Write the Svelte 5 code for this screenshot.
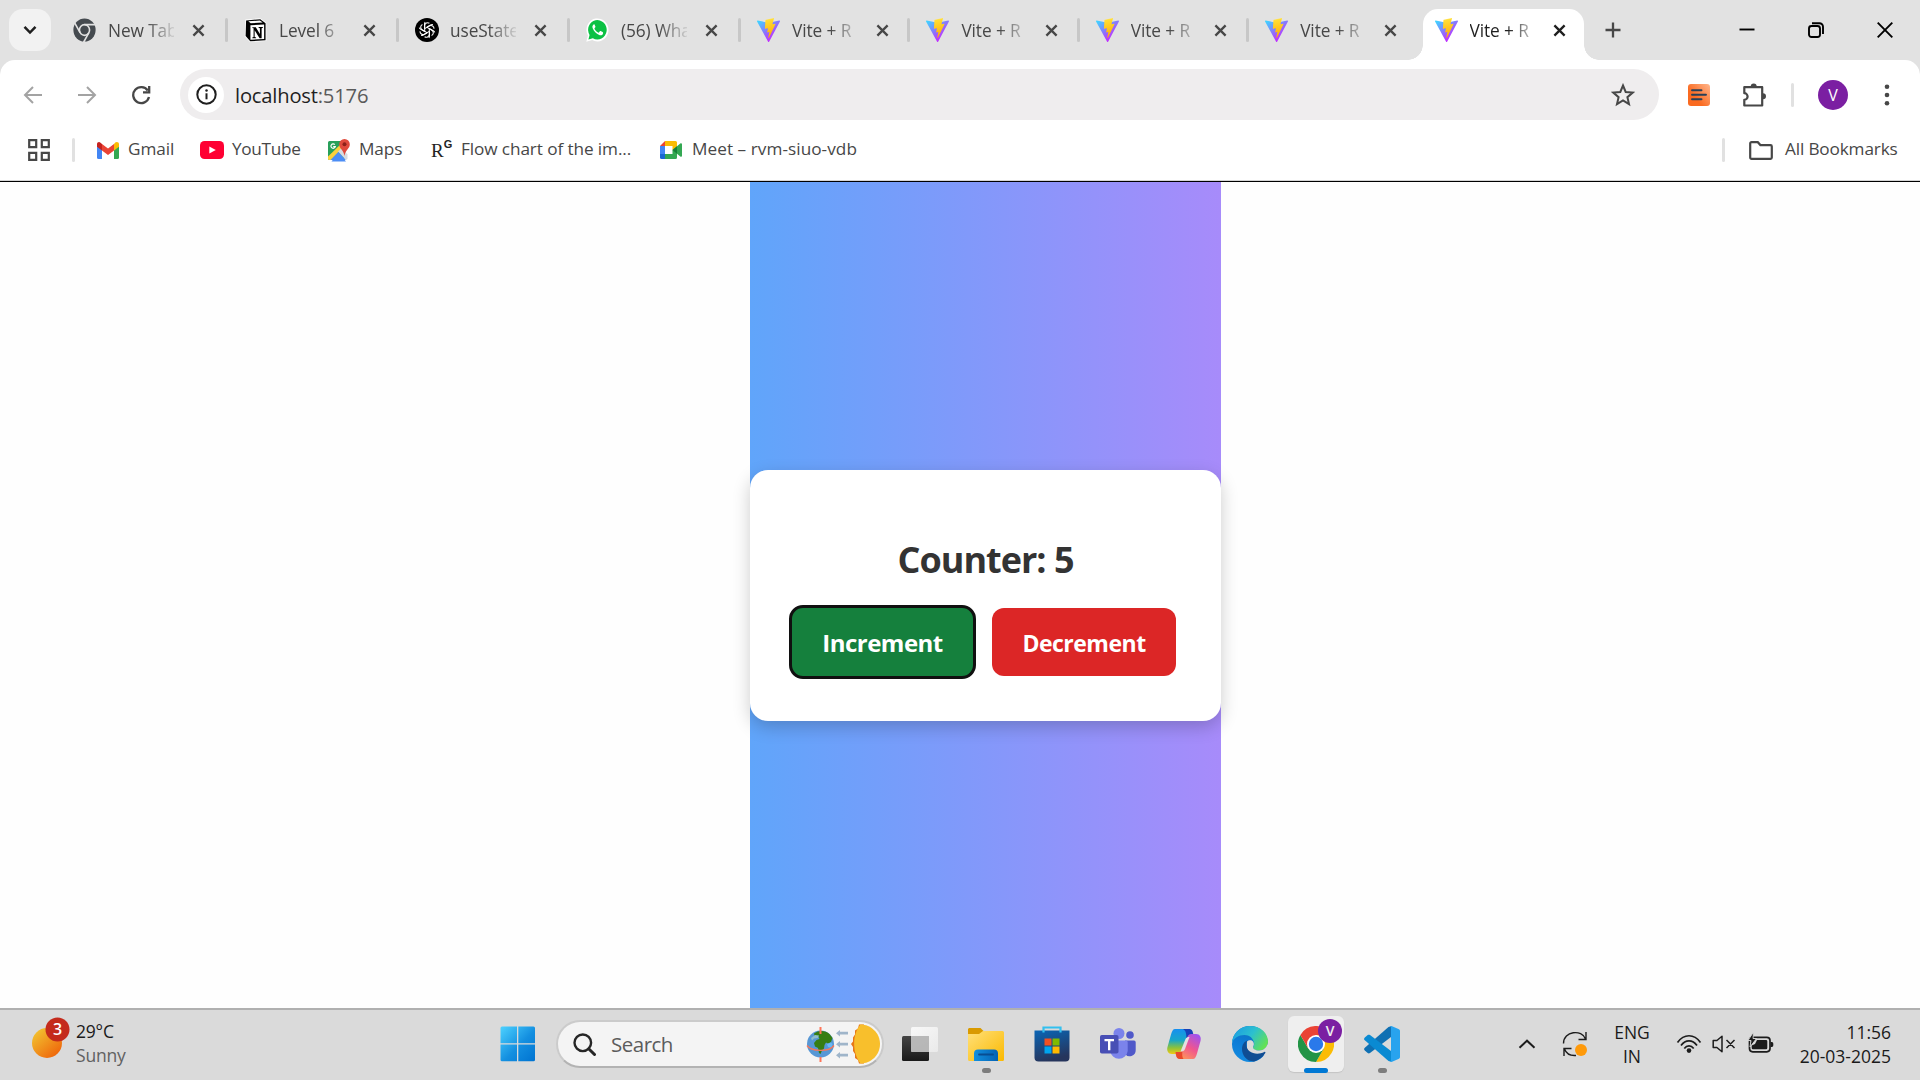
<script>
  const tabs = [
    { icon: 'chrome', title: 'New Tab', width: 171 },
    { icon: 'notion', title: 'Level 6', width: 171 },
    { icon: 'gpt', title: 'useState', width: 171 },
    { icon: 'whatsapp', title: '(56) Wha', width: 171 },
    { icon: 'vite', title: 'Vite + R', width: 169.4 },
    { icon: 'vite', title: 'Vite + R', width: 169.4 },
    { icon: 'vite', title: 'Vite + R', width: 169.4 },
    { icon: 'vite', title: 'Vite + R', width: 169.4 },
    { icon: 'vite', title: 'Vite + R', width: 169.4, active: true }
  ];
  let count = $state(5);
</script>

{#snippet vite()}
  <svg class="fav" viewBox="0 0 256 257" preserveAspectRatio="none">
    <path fill="url(#viteA)" d="M255.2 37.9 134.9 253a6.500 6.500 0 0 1-11.400 0L.9 37.900c-2.800-4.900 1.400-10.800 6.900-9.800l120.400 21.500a6.500 6.500 0 0 0 2.300 0l117.900-21.500c5.500-1 9.700 4.900 6.800 9.800Z" />
    <path fill="url(#viteB)" d="M185.400 0 96.400 17.500a3.300 3.300 0 0 0-2.600 3l-5.500 92.400a3.300 3.300 0 0 0 4 3.400l24.800-5.700c2.300-.5 4.400 1.500 3.900 3.900l-7.400 36c-.5 2.500 1.800 4.500 4.200 3.800l15.300-4.600c2.400-.7 4.700 1.400 4.200 3.800l-11.700 56.600c-.7 3.600 4 5.500 6 2.500l1.300-2 72.500-144.800c1.200-2.400-.9-5.200-3.500-4.700l-25.500 5c-2.400.4-4.400-1.900-3.800-4.200L189.300 4.100A3.300 3.300 0 0 0 185.400 0Z" />
  </svg>
{/snippet}

{#snippet cross()}
  <svg class="cross" viewBox="0 0 14 14"><path d="M1.500 1.500 12.500 12.500M12.500 1.500 1.500 12.500" /></svg>
{/snippet}

<svg class="defs" aria-hidden="true">
  <defs>
    <linearGradient id="viteA" x1="0" y1=".1" x2=".6" y2=".85"><stop stop-color="#41d1ff" /><stop offset="1" stop-color="#bd34fe" /></linearGradient>
    <linearGradient id="viteB" x1=".4" y1="0" x2=".5" y2="1"><stop stop-color="#ffea83" /><stop offset=".1" stop-color="#ffdd35" /><stop offset="1" stop-color="#ffa800" /></linearGradient>
    <linearGradient id="sun" x1=".1" y1=".1" x2=".8" y2=".9"><stop stop-color="#f2c230" /><stop offset="1" stop-color="#ef690c" /></linearGradient>
    <linearGradient id="win" x1="0" y1="0" x2="1" y2="1"><stop stop-color="#4dd2ff" /><stop offset=".55" stop-color="#138fe0" /><stop offset="1" stop-color="#0073d1" /></linearGradient>
    <linearGradient id="folder" x1="0" y1="0" x2="1" y2="1"><stop stop-color="#ffe07a" /><stop offset="1" stop-color="#fbb900" /></linearGradient>
    <linearGradient id="tray" x1="0" y1="0" x2="1" y2="0"><stop stop-color="#1290df" /><stop offset="1" stop-color="#0462b5" /></linearGradient>
    <linearGradient id="store" x1="0" y1="0" x2=".3" y2="1"><stop stop-color="#0a65b5" /><stop offset="1" stop-color="#26355c" /></linearGradient>
    <linearGradient id="coA" x1="0" y1="0" x2="0" y2="1"><stop stop-color="#168ff0" /><stop offset=".45" stop-color="#18a7c9" /><stop offset=".75" stop-color="#8cc23c" /><stop offset="1" stop-color="#f0ca12" /></linearGradient>
    <linearGradient id="coB" x1=".8" y1="0" x2=".2" y2="1"><stop stop-color="#a052ef" /><stop offset=".5" stop-color="#f0568e" /><stop offset="1" stop-color="#ff9c55" /></linearGradient>
    <linearGradient id="edgeA" x1="0" y1=".2" x2="1" y2=".7"><stop stop-color="#1b9de2" /><stop offset=".5" stop-color="#2cc0cf" /><stop offset="1" stop-color="#66e34e" /></linearGradient>
    <linearGradient id="edgeB" x1=".6" y1="0" x2=".3" y2="1"><stop stop-color="#0f6fb8" /><stop offset=".5" stop-color="#0c7bd6" /><stop offset="1" stop-color="#148be0" /></linearGradient>
    <linearGradient id="dark" x1="0" y1="0" x2="0" y2="1"><stop stop-color="#444" /><stop offset="1" stop-color="#191919" /></linearGradient>
    <linearGradient id="glass" x1="0" y1="0" x2="1" y2="1"><stop stop-color="#fff" /><stop offset="1" stop-color="#ededed" /></linearGradient>
    <linearGradient id="orange" x1="1" y1="0" x2=".3" y2=".6"><stop stop-color="#ffb68c" /><stop offset="1" stop-color="#fa6a20" /></linearGradient>
  </defs>
</svg>

<div class="screen">
  <header class="strip">
    <button class="tabsearch" aria-label="Search tabs">
      <svg width="14" height="10" viewBox="0 0 14 10"><path d="M1.500 1.800 7 7.500 12.500 1.800" fill="none" stroke="#1f1f1f" stroke-width="2.500" /></svg>
    </button>
    <div class="tabs">
      {#each tabs as tab}
        <div class="tab" class:active={tab.active} style:width="{tab.width}px">
          <span class="favbox">
            {#if tab.icon === 'chrome'}
              <svg class="fav" viewBox="0 0 24 24" preserveAspectRatio="none">
                <circle cx="12" cy="12" r="11.600" fill="#454a4f" />
                <circle cx="12" cy="12" r="5.300" fill="none" stroke="#e2e2e2" stroke-width="1.700" />
                <path d="M12 6.700H23M7.400 14.650 1.900 5.100M16.600 14.650 11.100 24.200" stroke="#e2e2e2" stroke-width="1.700" />
              </svg>
            {:else if tab.icon === 'notion'}
              <svg class="fav" viewBox="0 0 24 24" preserveAspectRatio="none">
                <path d="M1.500 1.500 17 .3 23.300 4.700V23l-17 1L.8 18.500Z" fill="#fff" />
                <path d="M2.200 2.500 17 1.200l5.500 4v17L6.500 23.300 1.700 18Z" fill="#000" />
                <path d="M4.500 3.300 16.500 2.500 19.500 4.600 7 5.300Z" fill="#fff" />
                <path d="M6.700 7.300 21 6.400v14.500L6.700 21.800Z" fill="#fff" />
                <path d="M8.700 9.200h3.600l4.300 6.800V10.200l-1.400-.4V8.900h4.500v.9l-1.300.4v10h-2.100l-5.200-7.900v6.600l1.500.5v.8H8.700v-.8l1.300-.5V10.300l-1.300-.3Z" fill="#000" />
              </svg>
            {:else if tab.icon === 'gpt'}
              <svg class="fav gpt" viewBox="0 0 24 24">
                <circle cx="12" cy="12" r="12" fill="#000" />
                <g fill="none" stroke="#fff" stroke-width="1.050">
                  {#each [0, 60, 120, 180, 240, 300] as a}
                    <path transform="rotate({a} 12 12)" d="M9.700 13.300V7.600a3 3 0 0 1 4.700-2.300M11.800 9.300l4.300-2.500a3 3 0 0 1 1.800-.3" />
                  {/each}
                </g>
              </svg>
            {:else if tab.icon === 'whatsapp'}
              <svg class="fav" viewBox="0 0 24 24" preserveAspectRatio="none">
                <path d="M.3 23.700 2 17.600A11.500 11.500 0 1 1 6.500 22Z" fill="#fff" />
                <path d="M2.500 21.500 3.700 17a9.700 9.700 0 1 1 3.500 3.300Z" fill="#0cc144" />
                <path d="M8.300 6.300c-1.500.6-2 2.400-1.300 4 1.400 3.300 3.500 5.400 6.800 6.800 1.700.7 3.600 0 4-1.700.1-.8 0-1-.5-1.300l-2-1c-.5-.2-.7-.1-1 .3l-.8 1c-.3.300-.5.300-.9.100-1.800-.9-2.800-1.900-3.700-3.500-.2-.4-.1-.6.200-.9l.6-.8c.2-.3.200-.5.100-.8l-.9-2c-.2-.4-.4-.4-.6-.2Z" fill="#fff" />
              </svg>
            {:else}
              {@render vite()}
            {/if}
          </span>
          <span class="title">{tab.title}</span>
          {@render cross()}
        </div>
      {/each}
    </div>
    <svg class="plus" viewBox="0 0 16 16"><path d="M8 .5v15M.5 8h15" /></svg>
    <div class="winctl">
      <svg width="16" height="16" viewBox="0 0 16 16"><path d="M.5 7.500h15" /></svg>
      <svg width="16" height="16" viewBox="0 0 16 16"><rect x="1" y="4" width="11" height="11" rx="2.500" /><path d="M4 1.200h7.500a3.500 3.500 0 0 1 3.500 3.500V12" /></svg>
      <svg width="16" height="16" viewBox="0 0 16 16"><path d="M.7.7 15.300 15.300M15.300.7.7 15.300" /></svg>
    </div>
  </header>

  <div class="chrome">
    <div class="toolbar">
      <div class="nav">
        <svg class="off" width="20" height="20" viewBox="0 0 20 20"><path d="M19 10H2.500M10 2 2 10l8 8" /></svg>
        <svg class="off" width="20" height="20" viewBox="0 0 20 20"><path d="M1 10h16.500M10 2l8 8-8 8" /></svg>
        <svg width="20" height="20" viewBox="0 0 20 20"><path d="M16.800 5.500A8 8 0 1 0 18 12M18.200 1v6.300H12" /></svg>
      </div>
      <div class="address">
        <span class="info">
          <svg width="21" height="21" viewBox="0 0 21 21"><circle cx="10.500" cy="10.500" r="9.200" fill="none" stroke="#1f1f1f" stroke-width="2" /><path d="M10.500 9.300v6" stroke="#1f1f1f" stroke-width="2" /><circle cx="10.500" cy="6.400" r="1.250" fill="#1f1f1f" /></svg>
        </span>
        <span class="url">localhost<span>:5176</span></span>
        <svg class="star" width="24" height="24" viewBox="0 0 24 24"><path d="M12 2.500 14.700 9l7 .6-5.300 4.600 1.600 6.900-6-3.700-6 3.700 1.600-6.900L2.300 9.600l7-.6Z" /></svg>
      </div>
      <svg class="ext" width="22" height="22" viewBox="0 0 22 22"><rect width="22" height="22" rx="3" fill="url(#orange)" /><path d="M4 6.200h9.500M4 10.700h14M4 15.200h9.500" stroke="#274058" stroke-width="1.900" stroke-linecap="round" /></svg>
      <svg class="puzzle" width="26" height="26" viewBox="0 0 26 26"><path d="M3.300 5.200H21.200V23.500H3.300v-5.700a3.300 3.300 0 0 0 0-6.600Z" fill="none" stroke="#474747" stroke-width="2.200" stroke-linejoin="round" /><path d="M9.700 4.500a3 3 0 0 1 6 0ZM22 11.300a3 3 0 0 1 0 6Z" fill="#474747" /></svg>
      <i class="bar"></i>
      <span class="avatar">V</span>
      <svg class="dots" width="6" height="24" viewBox="0 0 6 24"><circle cx="3" cy="3.700" r="2.300" /><circle cx="3" cy="12" r="2.300" /><circle cx="3" cy="20.300" r="2.300" /></svg>
    </div>

    <nav class="bookmarks">
      <svg class="apps" width="22" height="22" viewBox="0 0 22 22"><path d="M1.200 1.200h7v7h-7ZM13.800 1.200h7v7h-7ZM1.200 13.800h7v7h-7ZM13.800 13.800h7v7h-7Z" fill="none" stroke="#474747" stroke-width="2.200" /></svg>
      <i class="bar"></i>
      <span class="bm gmail">
        <svg width="22" height="17" viewBox="0 0 22 17"><path d="M0 2v13.500A1.500 1.500 0 0 0 1.500 17H5V6Z" fill="#4285f4" /><path d="M22 2v13.500a1.500 1.500 0 0 1-1.500 1.500H17V6Z" fill="#34a853" /><path d="M17 2v6.500l5-3.800V2.200C22 .2 19.800-.6 18.200.6Z" fill="#fbbc04" /><path d="M5 8.500V2l6 4.500L17 2v6.500L11 13Z" fill="#ea4335" /><path d="M0 2.200v2.500l5 3.800V2L3.800.9C2.200-.6 0 .2 0 2.200Z" fill="#c5221f" /></svg><span>Gmail</span>
      </span>
      <span class="bm yt">
        <svg width="24" height="18" viewBox="0 0 24 18"><rect width="24" height="18" rx="4.500" fill="#ff0033" /><path d="M9.300 5.400v7.200l6.500-3.600Z" fill="#fff" /></svg><span>YouTube</span>
      </span>
      <span class="bm maps">
        <svg width="22" height="23" viewBox="0 0 22 23"><path d="M1.500 2h15v19h-15A1.500 1.500 0 0 1 0 19.500v-16A1.500 1.500 0 0 1 1.500 2Z" fill="#28a05a" /><path d="m2 21 8-8.500 8 8.500Z" fill="#4c8df5" /><path d="M0 17.500 15 3l2.500 2.500L2.500 21H1.500A1.500 1.500 0 0 1 0 19.500Z" fill="#fbd13c" /><path d="m10 12.500 4-4 5.500 7V20L18 21Z" fill="#d8dce0" /><path d="m3.500 22.500 7-9 7.500 9Z" fill="#4c8df5" /><path d="M16.500 0a5.300 5.300 0 0 0-5.300 5.400c0 4 4.500 5.400 5.300 11.600.8-6.200 5.300-7.600 5.300-11.600A5.300 5.300 0 0 0 16.500 0Z" fill="#e04a3c" /><circle cx="16.500" cy="5.300" r="2" fill="#8d2119" /><path d="M6.800 5.600a2.200 2.200 0 1 0 .5 2H5.200" fill="none" stroke="#fff" stroke-width="1.200" /></svg><span>Maps</span>
      </span>
      <span class="bm rg"><b>R<sup>G</sup></b><span>Flow chart of the im...</span></span>
      <span class="bm meet">
        <svg width="22" height="18" viewBox="0 0 22 18"><path d="M5 0v5H0Z" fill="#ea4335" /><path d="M0 5h5v8H0Z" fill="#4285f4" /><path d="M0 13h5v5H1.500A1.500 1.500 0 0 1 0 16.500Z" fill="#1967d2" /><path d="M5 0h10.500A1.500 1.500 0 0 1 17 1.500V7l-4.500 2V5H5Z" fill="#fbbc04" /><path d="M5 18h10.500a1.500 1.500 0 0 0 1.500-1.500V11l-4.500-2v4H5Z" fill="#34a853" /><path d="m12.500 9 7.800-6.500c.7-.6 1.700 0 1.700.8v11.400c0 .8-1 1.400-1.700.8Z" fill="#34a853" /><path d="M12.500 9 17 5.300v7.400Z" fill="#188038" /></svg><span>Meet – rvm-siuo-vdb</span>
      </span>
      <i class="bar end"></i>
      <span class="bm all">
        <svg width="24" height="19" viewBox="0 0 24 19"><path d="M2.500 1.200h6.300l2.600 2.900h10.100a1.300 1.300 0 0 1 1.300 1.300v11.100a1.300 1.300 0 0 1-1.300 1.300h-19a1.300 1.300 0 0 1-1.300-1.300v-14a1.300 1.300 0 0 1 1.300-1.300Z" fill="none" stroke="#474747" stroke-width="2.200" /></svg><span>All Bookmarks</span>
      </span>
    </nav>
  </div>

  <main>
    <section class="gradient">
      <div class="card">
        <h1>Counter: {count}</h1>
        <div class="actions">
          <button class="inc" onclick={() => count++}>Increment</button>
          <button class="dec" onclick={() => count--}>Decrement</button>
        </div>
      </div>
    </section>
  </main>

  <footer>
    <div class="weather">
      <svg width="40" height="44" viewBox="0 0 40 44"><circle cx="16" cy="27" r="15" fill="url(#sun)" /><circle cx="26.500" cy="13.500" r="12" fill="#c42b1c" /><text x="26.500" y="19.300" text-anchor="middle" fill="#fff" font-size="16" font-weight="600">3</text></svg>
      <div><p>29°C</p><p class="dim">Sunny</p></div>
    </div>
    <div class="dock">
      <span class="cell">
        <svg width="36" height="36" viewBox="0 0 36 36"><path d="M2 .5h15v16.700H.5V2A1.500 1.500 0 0 1 2 .5ZM18.300.5h15.200A1.500 1.500 0 0 1 35 2v15.200H18.300ZM.5 18.500H17v16.700H2a1.500 1.500 0 0 1-1.500-1.500ZM18.300 18.500H35v15.200a1.500 1.500 0 0 1-1.500 1.500H18.300Z" fill="url(#win)" /></svg>
      </span>
      <div class="search">
        <svg width="23" height="23" viewBox="0 0 23 23"><circle cx="9.800" cy="9.800" r="8.300" fill="none" stroke="#262626" stroke-width="2.400" /><path d="m15.700 15.700 5.800 5.800" stroke="#262626" stroke-width="3" stroke-linecap="round" /></svg>
        <span>Search</span>
        <svg class="doodle" width="76" height="40" viewBox="0 0 76 40">
          <circle cx="14.500" cy="20" r="13.500" fill="#5797d5" />
          <path d="M8 9.500c5-4 12-3 15.500.5l3 4-1.500 4-3 1.500-2-1-1.500 2.500-.5 3.500-2 2-1.500 3.500-1.500-1-1-5-3-1.500-1-3.500 2.500-3 3-1-1-2-3.500 1Z" fill="#367d12" />
          <path d="M5 14l4-3 4 .5-1 2.500-4 .5-2 2Z" fill="#8fbecb" />
          <path d="M21 20l4-1.500 1.500 1.500-1 4-3.500-1Z" fill="#67b8f5" />
          <path d="M1 21.500c4 6 22 7 27 0" fill="none" stroke="#f2785c" stroke-width="1.400" />
          <path d="M14.500 3v7M14.500 33v5" stroke="#ff7558" stroke-width="2" />
          <path d="m30 9.200 4-3.200v1.800h8v2.800h-8v1.800ZM30 20.200l4-3.200v1.800h8v2.800h-8v1.800ZM30 31.200l4-3.200v1.800h8v2.800h-8v1.800Z" fill="#9fb5ca" />
          <path d="M58 .5H53l-1 4-3 2 0 4-2 3v4l-2 2.500 2 3v4l2 3 0 4 3 2 1 3.500h5Z" fill="#e77717" />
          <path d="M54.500 39.500C46 29 46 10 54.500.5 65 .5 74 9 74 20s-9 19.500-19.500 19.500Z" fill="#f8bf2c" />
        </svg>
      </div>
      <span class="cell tv">
        <svg width="36" height="34" viewBox="0 0 36 34"><rect y="9" width="27" height="25" rx="1.500" fill="url(#dark)" /><rect x="9" width="27" height="25" rx="1.500" fill="url(#glass)" opacity=".82" /><path d="M9 9h18v16H10.500A1.500 1.500 0 0 1 9 23.500Z" fill="#b3b3b3" opacity=".85" /></svg>
      </span>
      <span class="cell run">
        <svg width="36" height="34" viewBox="0 0 36 34"><path d="M1 1h11.500L16 4.500V12H0V2Z" fill="#d99a00" /><path d="M0 7h11l4-3h19.500A1.500 1.500 0 0 1 36 5.500v27a1.500 1.500 0 0 1-1.500 1.500h-33A1.500 1.500 0 0 1 0 32.500Z" fill="url(#folder)" /><path d="M6 34v-7.500a4 4 0 0 1 4-4h16a4 4 0 0 1 4 4V34Z" fill="url(#tray)" /><path d="M11 27.500h14" stroke="#084d92" stroke-width="1.800" stroke-linecap="round" /></svg>
      </span>
      <span class="cell">
        <svg width="36" height="36" viewBox="0 0 36 36"><path d="M.5 4.500h35v27a4 4 0 0 1-4 4h-27a4 4 0 0 1-4-4Z" fill="url(#store)" /><path d="M9.500 6.500V1.500h17v5" fill="none" stroke="#32c0ef" stroke-width="2.200" /><path d="M10.500 12.500h7v7h-7Z" fill="#f25022" /><path d="M18.500 12.500h7v7h-7Z" fill="#7fba00" /><path d="M10.500 20.500h7v7h-7Z" fill="#00a4ef" /><path d="M18.500 20.500h7v7h-7Z" fill="#ffb900" /></svg>
      </span>
      <span class="cell">
        <svg width="36" height="34" viewBox="0 0 36 34"><circle cx="30" cy="8" r="3.800" fill="#5059c9" /><path d="M25 13.500h9a1.700 1.700 0 0 1 1.700 1.700V23a6 6 0 0 1-11 3.500Z" fill="#5059c9" /><circle cx="19" cy="6.500" r="5.500" fill="#7b83eb" /><path d="M11 13.500h15a1.700 1.700 0 0 1 1.700 1.700V24a8.800 8.800 0 0 1-17.500 0Z" fill="#7b83eb" /><rect y="8" width="18.500" height="18.500" rx="1.800" fill="#484fb5" /><path d="M4.500 12h9.500v2.300h-3.600v9H8v-9H4.500Z" fill="#fff" /></svg>
      </span>
      <span class="cell">
        <svg width="36" height="34" viewBox="0 0 36 34"><path d="M9 2h15l2 8-4 1-5 13c-1 2-2 3-4 3H6c-4 0-5.500-3.500-4.500-7L5 7.500C6 4 7 2 9 2Z" fill="url(#coA)" /><path d="M17 2h6c2.500 0 3.500 1.500 4 4l1 4h-4c-1.500 0-2.500.4-3.500 1.200C20.200 6.500 20 3.500 17 2Z" fill="#1741b8" /><path d="M27 32H14c-2.500 0-3.500-1.500-4-4l-.5-3H13c2 0 3.500-1.500 4.500-4L21 11c1-2.500 2-4 4.500-4h4.500c4 0 5.500 3.500 4.500 7L31 26.500c-1 3.500-2 5.500-4 5.500Z" fill="url(#coB)" /><path d="M9.500 25H13c1.500 0 2.500-.5 3.500-1.500-.5 4-.5 6.500 1 8.500H14c-2.500 0-3.500-1.500-4-4Z" fill="#e9492b" /><path d="M19.500 12c.8-1.500 2-2 4-2l-4.500 12c-.8 2-2 2.500-4.500 2.500Z" fill="#e4e0e0" /></svg>
      </span>
      <span class="cell">
        <svg width="36" height="36" viewBox="0 0 36 36"><circle cx="18" cy="18" r="18" fill="url(#edgeB)" /><path d="M0 17C.5 7.500 8 0 18 0c11 0 18 7.500 18 15.500 0 6-4.500 9-9 9-4 0-6.500-1.500-6-3 1-2 1.500-3 1-5C21 12 17.500 9 12.500 9 6.500 9 1.500 12.500 0 17Z" fill="url(#edgeA)" /><path d="M15 15.500c1.500-1.500 4.500-2 6 0 1.500 2 .8 4 .2 5-1 2 2 4 6 4 4.500 0 7.800-3.500 8.800-7.500V25l-2 4-10 2-9-5Z" fill="#dadada" /><path d="M15.500 14.500c-3.500 1-5.500 4.500-5.500 8.500 0 7.500 6.500 13.500 13 12.200 4.500-1.500 8-4.500 10.300-8.200.5-.8-.3-1.400-1-1-8 4-18 .5-18-7.500 0-1.500.5-3 1.200-4Z" fill="#0f4d93" /></svg>
      </span>
      <span class="cell">
        <span class="tile">
          <svg width="36" height="36" viewBox="0 0 36 36"><path d="M18 9h15.600A18 18 0 0 1 18 36l7.800-13.500Z" fill="#fbbc04" /><path d="m10.200 22.500-7.800-13.500A18 18 0 0 0 18 36l7.800-13.500Z" fill="#229446" /><path d="M2.400 9A18 18 0 0 1 33.600 9H18l-7.800 13.500Z" fill="#ea4335" /><circle cx="18" cy="18" r="9" fill="#fff" /><circle cx="18" cy="18" r="7.200" fill="#2a79ea" /></svg>
          <span class="badge">V</span>
        </span>
      </span>
      <span class="cell run">
        <svg width="36" height="36" viewBox="0 0 36 36"><path d="M27 .2V11L6 27c-.8.500-1.600.500-2.300 0L.8 24.500c-1-.9-1-1.900 0-2.800L24.500 1Z" fill="#0f70b3" /><path d="M27 35.800V25L6 9c-.8-.5-1.600-.5-2.300 0L.8 11.500c-1 .9-1 1.900 0 2.800L24.500 35Z" fill="#0a8ad2" /><path d="M26 .2 27.500 0 35 3.300a2 2 0 0 1 1 1.900v25.600a2 2 0 0 1-1 1.900L27.500 36l-1.500-.2c.8 0 1-.8 1-1.800V2c0-1-.2-1.800-1-1.800Z" fill="#28a3ee" /></svg>
      </span>
    </div>
    <div class="systray">
      <svg class="up" width="18" height="10" viewBox="0 0 18 10"><path d="m1.500 8.700 7.500-7 7.500 7" fill="none" stroke="#1c1c1c" stroke-width="2" /></svg>
      <svg class="sync" width="26" height="26" viewBox="0 0 26 26"><path d="M1.500 12.500C1.500 0 20 -2 23.500 8M24 1v7.500h-7.500M14 24.500C8 25 4 22 2.500 18M2 25v-7.500h7.500" fill="none" stroke="#1c1c1c" stroke-width="1.400" /><circle cx="19" cy="19" r="6" fill="#ff9a0b" /></svg>
      <div class="lang"><p>ENG</p><p>IN</p></div>
      <svg class="wifi" width="26" height="20" viewBox="0 0 26 20"><g fill="none" stroke="#1c1c1c" stroke-width="1.700"><path d="M1.500 8.500C8-.5 18-.5 24.500 8.500M5 11.500c4.500-6.200 11.500-6.200 16 0M8.300 14.500c2.700-3.600 6.700-3.600 9.400 0" /></g><circle cx="13" cy="16.600" r="2.300" fill="#1c1c1c" /></svg>
      <svg class="vol" width="24" height="18" viewBox="0 0 24 18"><path d="M1.200 5.500h3.700L10 1.200v15.600L4.900 12.500H1.200ZM14.500 5l8 8M22.500 5l-8 8" fill="none" stroke="#1c1c1c" stroke-width="1.500" stroke-linejoin="round" /></svg>
      <svg class="bat" width="26" height="22" viewBox="0 0 26 22"><rect x="1.500" y="5.300" width="20.500" height="14.500" rx="3.200" fill="none" stroke="#1c1c1c" stroke-width="1.700" /><path d="M22.500 10h1.300c1 0 1.500.8 1.500 2v1c0 1.200-.5 2-1.500 2h-1.300Z" fill="#1c1c1c" /><path d="M9 8h9a1.300 1.300 0 0 1 1.300 1.300V16a1.300 1.300 0 0 1-1.300 1.300H5A1.300 1.300 0 0 1 3.700 16v-2.500L7 12Z" fill="#1c1c1c" /><path d="M5.500 0 0 8.500h3L2 15l6.500-8.500H5Z" fill="#1c1c1c" stroke="#dadada" stroke-width=".9" /></svg>
      <div class="clock"><p>11:56</p><p>20-03-2025</p></div>
    </div>
  </footer>
</div>

<style>
  :global(body) { background: #fff; overflow: hidden; }
  .defs { position: absolute; width: 0; height: 0; }
  .screen { width: 1920px; height: 1080px; display: flex; flex-direction: column; background: #e2e2e2; font-family: 'Open Sans', 'Noto Sans', sans-serif; color: #474747; overflow: hidden; }
  .screen * { box-sizing: border-box; }
  svg { display: block; flex: none; }
  p, h1 { margin: 0; }
  button { border: 0; padding: 0; font: inherit; }

  .strip { height: 60px; flex: none; display: flex; align-items: center; padding-left: 9px; }
  .tabsearch { width: 42px; height: 42px; border-radius: 14px; background: #f2f2f2; display: grid; place-items: center; }
  .tabs { display: flex; height: 60px; padding: 9px 0 0 6px; }
  .tab { display: flex; align-items: center; height: 51px; padding: 0 0 9px 16px; position: relative; font-size: 17.300px; letter-spacing: -.1px; }
  .tab::after { content: ''; position: absolute; right: 0; top: 9px; width: 3px; height: 24px; border-radius: 2px; background: #c7c7c7; }
  .tab:nth-last-child(2)::after { display: none; }
  .favbox { width: 24px; height: 24px; margin-right: 11px; }
  .fav { width: 23px; height: 24px; }
  .gpt { width: 24px; }
  .title { width: 66px; white-space: nowrap; line-height: 24px; padding-top: 2px; mask-image: linear-gradient(90deg, #000 38px, transparent 70px); }
  .cross { width: 13px; height: 13px; margin-left: 17.500px; fill: none; stroke: #474747; stroke-width: 2.500; }
  .active { color: #1f1f1f; }
  .active::before { content: ''; position: absolute; z-index: 0; left: 4px; width: 161px; top: 0; height: 51px; background: #fff; border-radius: 15px 15px 0 0; }
  .active > :global(*) { z-index: 1; }
  .tab.active::after { left: -11px; right: auto; top: 36px; width: 191px; height: 15px; border-radius: 0; background: radial-gradient(circle at 0 0, transparent 14.500px, #fff 15px) left / 15px 15px no-repeat, radial-gradient(circle at 100% 0, transparent 14.500px, #fff 15px) right / 15px 15px no-repeat; }
  .active .cross { stroke: #1f1f1f; }
  .plus { width: 16px; height: 16px; margin-left: 17.500px; stroke: #474747; stroke-width: 2.300; }
  .winctl { margin-left: auto; display: flex; gap: 53px; padding-right: 27px; fill: none; stroke: #000; stroke-width: 1.900; }

  .chrome { height: 122px; flex: none; background: #fff; border-radius: 15px 15px 0 0; border-bottom: 1px solid #000; box-shadow: inset 0 -1px #d5d5d5; }
  .toolbar { height: 69px; display: flex; align-items: center; padding: 9px 0 9px 23px; }
  .nav { display: flex; gap: 34px; width: 157px; fill: none; stroke: #474747; stroke-width: 2.300; }
  .nav .off { stroke: #a3a3a3; stroke-width: 2; }
  .address { width: 1479px; height: 51px; background: #efedee; border-radius: 26px; display: flex; align-items: center; padding-left: 8px; }
  .info { width: 36px; height: 36px; border-radius: 50%; background: #fff; display: grid; place-items: center; margin-right: 11px; }
  .url { font-size: 20.200px; letter-spacing: -.2px; color: #1f1f1f; }
  .url span { color: #5a5a5a; }
  .star { margin: 0 24px 0 auto; fill: none; stroke: #474747; stroke-width: 2; }
  .ext { margin-left: 28.500px; }
  .puzzle { margin-left: 31px; }
  .bar { width: 3px; height: 24px; border-radius: 2px; background: #e1e1e1; flex: none; }
  .toolbar .bar { margin-left: 24px; }
  .avatar { width: 30px; height: 30px; border-radius: 50%; background: #7b1fa2; color: #fff; margin-left: 24.500px; display: grid; place-items: center; font-size: 16px; }
  .dots { margin-left: 35.500px; fill: #474747; }
  .bookmarks { height: 42px; display: flex; align-items: center; padding: 0 22px 0 28px; font-size: 17.200px; letter-spacing: -.1px; white-space: nowrap; }
  .apps { margin-right: 22px; }
  .bm { display: flex; align-items: center; gap: 9px; }
  .bm > span { line-height: 24px; padding-bottom: 2px; }
  .gmail { width: 103px; margin-left: 22px; }
  .yt { width: 128px; gap: 8px; letter-spacing: -.3px; }
  .maps { width: 103px; }
  .rg { width: 229px; gap: 0; }
  .rg b { width: 30px; font: 19px 'Liberation Serif', serif; letter-spacing: 0; color: #222; display: flex; padding-top: 2px; }
  .rg sup { font: 700 11px 'Liberation Sans', sans-serif; line-height: 8px; margin: 0; vertical-align: top; }
  .meet { letter-spacing: .05px; gap: 10px; }
  .end { margin-left: auto; }
  .all { margin-left: 24px; gap: 12px; width: 149px; letter-spacing: -.15px; }

  main { height: 826px; flex: none; background: #fefefe; display: flex; justify-content: center; padding-left: 51px; }
  .gradient { width: 471px; background: linear-gradient(90deg, #60a5fa, #a78bfa); display: flex; align-items: center; }
  .card { width: 471px; height: 251px; border-radius: 18px; background: #fff; box-shadow: 0 6px 18px rgb(0 0 0 / .2); padding: 64px 0 0; }
  h1 { font-size: 36px; line-height: 52px; letter-spacing: -1px; text-align: center; font-weight: 700; color: #333; }
  .actions { display: flex; gap: 16px; align-items: center; padding: 19px 0 0 39px; }
  .actions button { font-weight: 700; color: #fff; border-radius: 12px; padding-top: 2px; }
  .actions .inc { width: 187px; height: 74px; background: #15803d; border: 3px solid #101010; border-radius: 14px; font-size: 24px; letter-spacing: -.5px; }
  .actions .dec { width: 184px; height: 68px; background: #dc2626; font-size: 23px; letter-spacing: -.5px; }

  footer { height: 72px; flex: none; background: #dadada; border-top: 2px solid #b0b0b0; display: flex; color: #1a1a1a; font-size: 17.500px; line-height: 24px; }
  .weather { width: 485px; padding: 6px 0 0 31px; display: flex; gap: 5px; letter-spacing: -.2px; }
  .weather svg { font-family: 'Open Sans', sans-serif; }
  .weather div { padding-top: 3px; }
  .dim { color: #616161; }
  .dock { display: flex; width: 934px; height: 68px; align-items: center; }
  .cell { width: 66px; height: 68px; flex: none; display: flex; align-items: center; justify-content: center; position: relative; }
  .run::after { content: ''; position: absolute; bottom: 5px; left: 29px; width: 9px; height: 5px; border-radius: 3px; background: #7d7d7d; }
  .search { width: 328px; height: 48px; margin: 0 3px 0 5px; flex: none; border-radius: 24px; background: #f4f4f4; border: 2px solid #cbcbcb; border-bottom-color: #b3b3b3; display: flex; align-items: center; padding-left: 15px; font-size: 20.500px; letter-spacing: -.5px; color: #5c5c5c; }
  .search span { margin-left: 15px; }
  .doodle { margin: 0 0 0 auto; }
  .tile { width: 56px; height: 56px; border-radius: 6px; background: #efefef; box-shadow: 0 1px 1px #c4c4c4; display: grid; place-items: center; position: relative; }
  .tile::after { content: ''; position: absolute; bottom: -1px; left: 16px; width: 24px; height: 5px; border-radius: 3px; background: #0078d4; }
  .badge { position: absolute; right: 2px; top: 3px; width: 24px; height: 24px; border-radius: 50%; background: #7b1fa2; color: #eee; text-align: center; font-size: 14px; font-weight: 600; }
  .systray { flex: 1; display: flex; align-items: center; height: 68px; }
  .up { margin-left: 99px; }
  .sync { margin-left: 26px; }
  .lang { text-align: center; width: 40px; margin-left: 24px; }
  .wifi { margin-left: 24px; }
  .vol { margin-left: 10px; }
  .bat { margin-left: 12px; margin-top: -3px; }
  .clock { margin-left: auto; padding-right: 29px; text-align: right; }
</style>
